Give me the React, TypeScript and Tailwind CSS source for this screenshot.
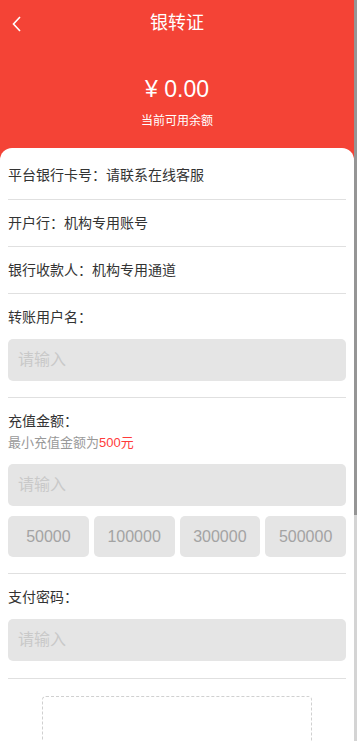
import React from "react";

const font = "font-['Liberation_Sans','Noto_Sans_CJK_SC',sans-serif]";

function InputBox() {
  return (
    <div className="mt-[12px] h-[42px] rounded-[5px] bg-[#e5e5e5] pl-[10px] flex items-center text-[16px] text-[#c9c9c9]">
      请输入
    </div>
  );
}

const infoRows = [
  ["平台银行卡号：", "请联系在线客服"],
  ["开户行：", "机构专用账号"],
  ["银行收款人：", "机构专用通道"],
];

const amounts = ["50000", "100000", "300000", "500000"];

export default function App() {
  return (
    <div className={`flex h-[741px] overflow-hidden bg-white ${font}`}>
      <div className="flex-1 min-w-0">
        <header className="h-[160px] bg-[#f44336] text-white">
          <div className="relative h-[44px] flex items-center justify-center">
            <svg
              className="absolute left-[11px] top-[15px]"
              width="12"
              height="18"
              viewBox="0 0 12 18"
              fill="none"
              stroke="white"
              strokeWidth="1.6"
            >
              <path d="M9 2 L2.5 9 L9 16" />
            </svg>
            <h1 className="mt-[2px] text-[18px] leading-[24px]">银转证</h1>
          </div>
          <div className="flex flex-col items-center pt-[30px]">
            <div className="text-[23px] leading-[30px]">¥ 0.00</div>
            <div className="mt-[9px] text-[12px] leading-[16px]">当前可用余额</div>
          </div>
        </header>

        <main className="relative -mt-[12px] rounded-t-[12px] bg-white px-[8px] pt-[4px] text-[#333]">
          {infoRows.map(([label, value], i) => (
            <div
              key={label}
              className={`border-b border-[#e0e0e0] text-[14px] leading-[20px] ${
                i === 0 ? "pt-[13px] pb-[14px]" : "py-[13px]"
              }`}
            >
              {label}
              {value}
            </div>
          ))}

          <div className="border-b border-[#e0e0e0] pt-[13px] pb-[16px]">
            <div className="text-[14px] leading-[20px]">转账用户名：</div>
            <InputBox />
          </div>

          <div className="border-b border-[#e0e0e0] pt-[13px] pb-[16px]">
            <div className="text-[14px] leading-[20px]">充值金额：</div>
            <div className="mt-[3px] text-[13px] leading-[18px] text-[#999]">
              最小充值金额为<span className="text-[#ff3b3b]">500元</span>
            </div>
            <InputBox />
            <div className="mt-[10px] grid grid-cols-4 gap-[5px]">
              {amounts.map((a) => (
                <div
                  key={a}
                  className="h-[41px] rounded-[5px] bg-[#e5e5e5] flex items-center justify-center text-[16px] text-[#a3a3a3]"
                >
                  {a}
                </div>
              ))}
            </div>
          </div>

          <div className="border-b border-[#e0e0e0] pt-[13px] pb-[17px]">
            <div className="text-[14px] leading-[20px]">支付密码：</div>
            <InputBox />
          </div>

          <div className="pt-[17px] pb-[160px] flex flex-col items-center">
            <div className="w-[270px] h-[200px] rounded-[4px] border border-dashed border-[#d0d0d0] flex items-center justify-center">
              <svg width="40" height="40" viewBox="0 0 40 40" stroke="#ccc" strokeWidth="2">
                <path d="M20 6 V34 M6 20 H34" />
              </svg>
            </div>
          </div>
        </main>
      </div>

      <div className="w-[3px] shrink-0 flex flex-col bg-[#d4d4d4]">
        <div className="h-[515px] bg-[#959595]" />
      </div>
    </div>
  );
}
